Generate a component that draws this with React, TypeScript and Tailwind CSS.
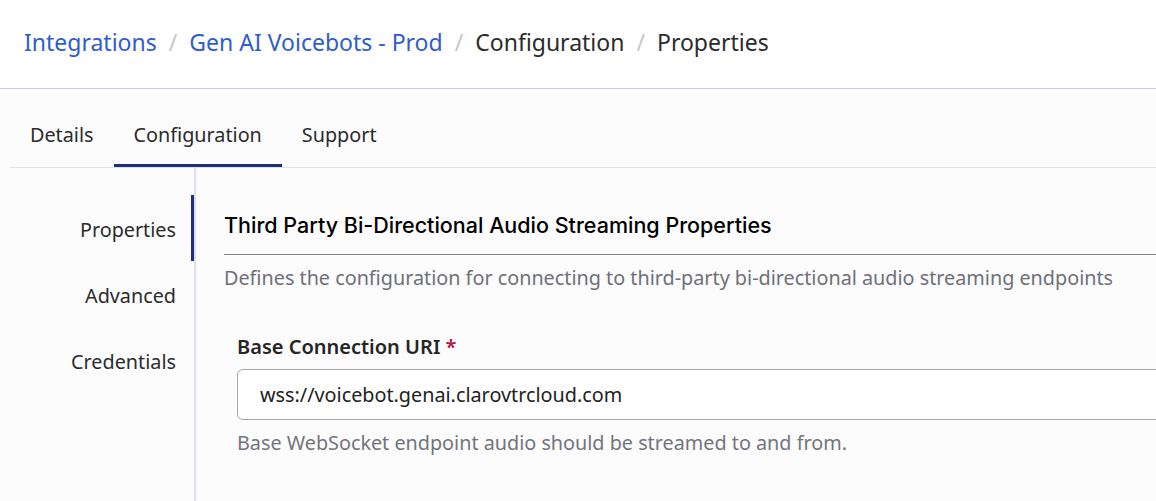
import React from "react";

const crumbs = [
	{ label: "Integrations", link: true },
	{ label: "Gen AI Voicebots - Prod", link: true },
	{ label: "Configuration", link: false },
	{ label: "Properties", link: false },
];

const tabs = ["Details", "Configuration", "Support"];
const sideItems = ["Properties", "Advanced", "Credentials"];

function Breadcrumbs() {
	return (
		<nav className="h-[89px] flex items-center px-6 pb-1 bg-white border-b border-[#c9d1e1]">
			{crumbs.map((c, i) => (
				<div key={c.label} className="flex items-center text-[23px] leading-8">
					{i > 0 && <span className="mx-3 text-[#c3c7cf]">/</span>}
					<span className={c.link ? "text-[#2f5ccf]" : "text-[#2b2b2b]"}>{c.label}</span>
				</div>
			))}
		</nav>
	);
}

function Tabs() {
	return (
		<div className="ml-[10px] pt-[12px] flex border-b border-[#dde2ec]">
			{tabs.map((t) => {
				const active = t === "Configuration";
				return (
					<div
						key={t}
						className={
							"h-[66px] px-5 pt-[4px] flex items-center text-[19.8px] text-[#2b2b2b] border-b-[3px] " +
							(active ? "border-[#1f2f78]" : "border-transparent")
						}
					>
						{t}
					</div>
				);
			})}
		</div>
	);
}

function SideNav() {
	return (
		<div className="w-[196px] shrink-0 pt-[27px] border-r-2 border-[#dde1ee]">
			{sideItems.map((s) => {
				const active = s === "Properties";
				return (
					<div
						key={s}
						className={
							"h-[66px] pt-[3px] flex items-center justify-end text-[19.8px] text-[#2b2b2b] " +
							(active ? "pr-[15px] border-r-[3px] border-[#1f2f78]" : "pr-[18px]")
						}
					>
						{s}
					</div>
				);
			})}
		</div>
	);
}

export default function App() {
	return (
		<div
			className="w-[1156px] h-[501px] overflow-hidden bg-[#fcfcfc]"
			style={{ fontFamily: '"Noto Sans", "Open Sans", sans-serif' }}
		>
			<Breadcrumbs />
			<Tabs />
			<div className="flex h-[340px]">
				<SideNav />
				<div className="pl-[28px] pt-[27px] w-[1100px] shrink-0">
					{/* section header */}
					<div className="h-[60px] pt-[2px] flex items-center border-b border-[#808080]">
						<h2
							className="text-[21.5px] font-medium text-black"
							style={{ fontFamily: 'Inter, "Noto Sans", sans-serif' }}
						>
							Third Party Bi-Directional Audio Streaming Properties
						</h2>
					</div>
					<p className="mt-[11px] text-[19.8px] leading-6 text-[#6e7079]">
						Defines the configuration for connecting to third-party bi-directional audio streaming endpoints
					</p>

					<div className="pl-[13px] mt-[45px]">
						<label className="block text-[20px] leading-6 font-semibold text-[#252525]">
							Base Connection URI <span className="text-[#b3134a]">*</span>
						</label>
						<div className="mt-[10px] h-[51px] bg-white border border-[#a3a6b1] rounded-md flex items-center pl-[22px] text-[19.8px] text-[#222]">
							wss://voicebot.genai.clarovtrcloud.com
						</div>
						<p className="mt-[11px] text-[19.8px] leading-6 text-[#72747c]">
							Base WebSocket endpoint audio should be streamed to and from.
						</p>
					</div>
				</div>
			</div>
		</div>
	);
}
